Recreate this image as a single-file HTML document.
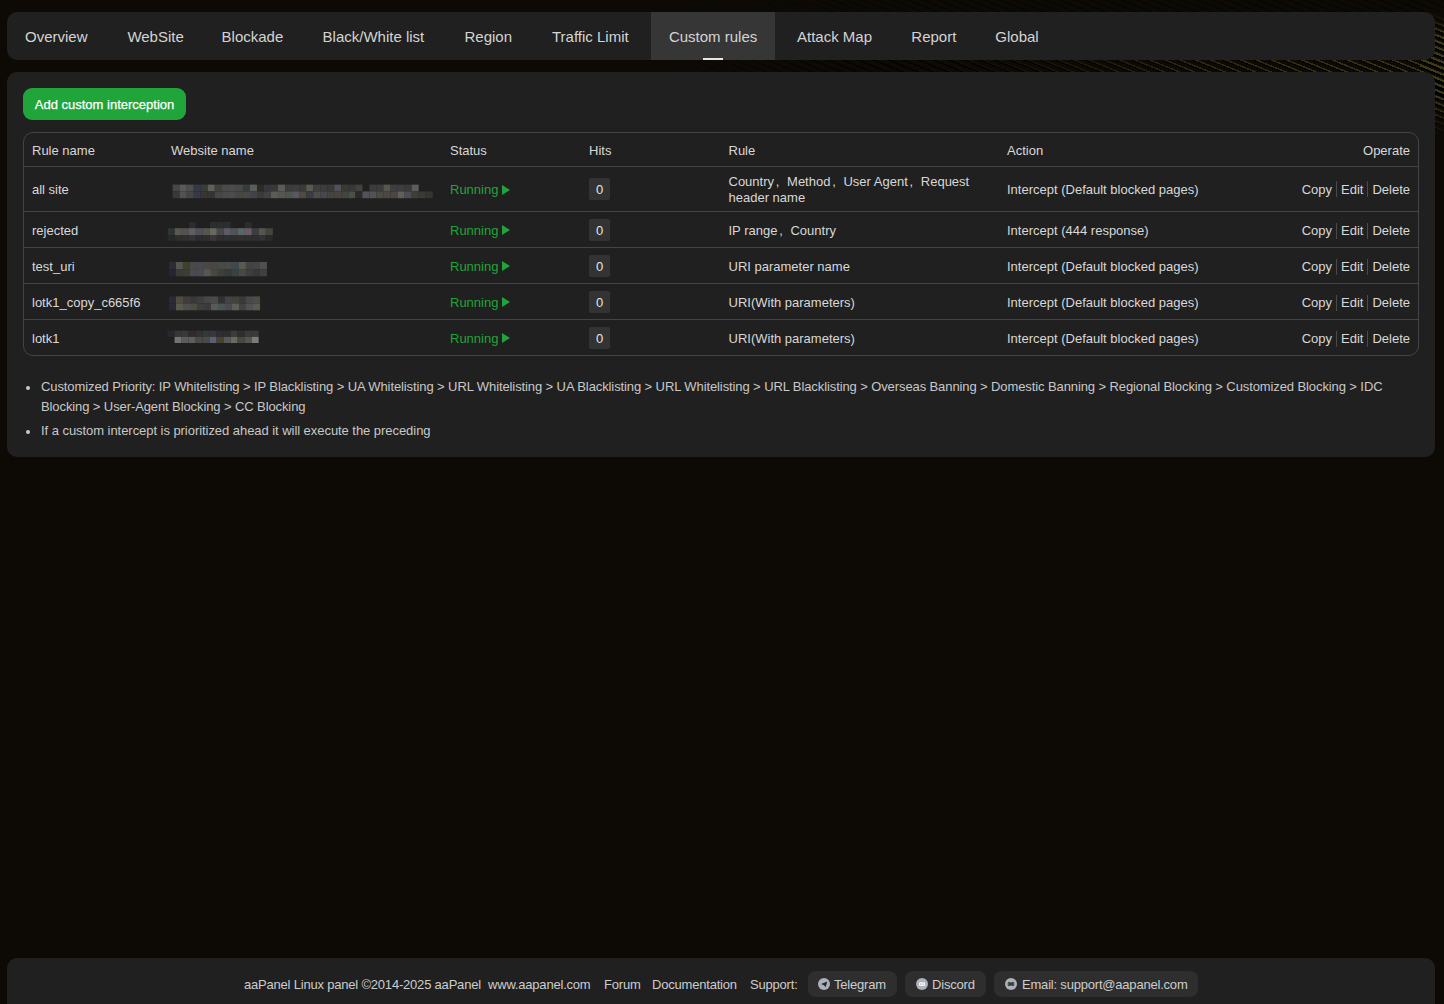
<!DOCTYPE html>
<html><head><meta charset="utf-8">
<style>
*{box-sizing:border-box;margin:0;padding:0}
html,body{width:1444px;height:1004px;overflow:hidden}
body{background:#0d0a06;font-family:"Liberation Sans",sans-serif;position:relative}
.stA{position:absolute;left:640px;top:0;width:804px;height:100px;opacity:0.9;
 background:repeating-linear-gradient(22deg, rgba(0,0,0,0) 0px, rgba(0,0,0,0) 2.5px, rgba(0,0,0,0.85) 2.5px, rgba(0,0,0,0.85) 4.2px, rgba(0,0,0,0) 4.2px, rgba(0,0,0,0) 5.7px);
 -webkit-mask-image:linear-gradient(to right, rgba(0,0,0,0) 0px, rgba(0,0,0,1) 300px)}
.stB{position:absolute;left:844px;top:0;width:600px;height:200px;
 background:repeating-linear-gradient(22deg, rgba(0,0,0,0) 0px, rgba(0,0,0,0) 4.2px, rgba(58,54,22,1) 4.2px, rgba(58,54,22,1) 5.7px);
 -webkit-mask-image:radial-gradient(ellipse 560px 56px at 600px 66px, rgba(0,0,0,1) 0%, rgba(0,0,0,0.7) 45%, rgba(0,0,0,0.2) 75%, rgba(0,0,0,0) 100%)}
.stC{position:absolute;left:1420px;top:0;width:24px;height:200px;
 background:repeating-linear-gradient(22deg, rgba(0,0,0,0) 0px, rgba(0,0,0,0) 2.5px, rgba(0,0,0,0.85) 2.5px, rgba(0,0,0,0.85) 4.2px, rgba(64,60,24,1) 4.2px, rgba(64,60,24,1) 5.7px);
 -webkit-mask-image:linear-gradient(to bottom, rgba(0,0,0,0) 15px, rgba(0,0,0,1) 35px, rgba(0,0,0,1) 95px, rgba(0,0,0,0) 135px)}
.panel{position:absolute;left:7px;width:1428px;background:#202020;border-radius:10px}
.nav{top:12px;height:48px}
.tab{position:absolute;top:13px;height:48px;line-height:48px;font-size:15px;color:#d4d4d4;white-space:nowrap}
.tab-active{position:absolute;left:651px;top:12px;width:124px;height:48px;background:#363636}
.tab-ul{position:absolute;left:703px;top:58px;width:20px;height:2px;background:#e6e6e6}
.content{top:72px;height:385px}
.btn{position:absolute;left:23px;top:88px;width:163px;height:32px;border-radius:9px;background:#20a53a;color:#fff;font-size:13px;line-height:34px;text-align:center;white-space:nowrap;-webkit-text-stroke:0.25px #fff}
.tbl{position:absolute;left:23px;top:132px;width:1396px;height:224px;border:1px solid #444444;border-radius:10px}
.hline{position:absolute;left:24px;width:1394px;height:1px;background:#444444}
.row{position:absolute;left:0;width:1444px}
.c{position:absolute;top:0;height:100%;display:flex;align-items:center;font-size:13px;color:#d8d8d8;white-space:nowrap}
.c.two{line-height:16px;top:1px}
.fw{display:inline-block;width:7.6px}
.fwl{display:inline-block;width:1.8px}
.dn .c{top:1px}
.dn .tri{top:-1px}
.hdr .c{color:#d8d8d8}
.run{color:#20a53a}
.tri{display:inline-block;width:0;height:0;border-left:8.5px solid #20a53a;border-top:5.5px solid transparent;border-bottom:5.5px solid transparent;margin-left:3.8px;position:relative;top:1px}
.hits{position:absolute;width:21px;height:22px;background:#333333;border-radius:2px;color:#e6e6e6;font-size:13px;line-height:24px;text-align:center}
.ops{right:34px}
.ops a{color:#d8d8d8}
.sep{display:inline-block;width:1px;height:16px;background:#4a4a4a;margin:0 4px}
.notes{position:absolute;left:41px;top:377px;width:1378px;font-size:13px;color:#c8c8c8;line-height:20px;letter-spacing:-0.1px}
.notes li{list-style:none;position:relative;margin-bottom:4px}
.notes li:before{content:"";position:absolute;left:-15px;top:9px;width:4px;height:4px;border-radius:50%;background:#c8c8c8}
.footer{top:958px;height:70px}
.ft{position:absolute;top:972px;height:25px;line-height:25px;font-size:13px;color:#cdcdcd;white-space:nowrap;letter-spacing:-0.2px}
.pill{position:absolute;top:971px;height:26px;border-radius:8px;background:#2e2e2e}
.ico{position:absolute;top:978px;width:12px;height:12px}
</style></head><body>
<div class="stA" style="height:12px;opacity:0.45"></div><div class="stA" style="top:60px;height:40px;background-position:0 -60px"></div><div class="stB"></div><div class="stC"></div>
<div class="panel nav"></div>
<div class="tab-active"></div>
<div class="tab-ul"></div>
<span class="tab" style="left:25.0px">Overview</span><span class="tab" style="left:127.4px">WebSite</span><span class="tab" style="left:221.6px">Blockade</span><span class="tab" style="left:322.6px">Black/White list</span><span class="tab" style="left:464.5px">Region</span><span class="tab" style="left:552.0px">Traffic Limit</span><span class="tab" style="left:668.9px">Custom rules</span><span class="tab" style="left:797.0px">Attack Map</span><span class="tab" style="left:911.3px">Report</span><span class="tab" style="left:995.3px">Global</span>
<div class="panel content"></div>
<div class="btn">Add custom interception</div>
<div class="tbl"></div>
<div class="row hdr" style="top:134px;height:33px">
<span class="c" style="left:32px">Rule name</span>
<span class="c" style="left:171px">Website name</span>
<span class="c" style="left:450px">Status</span>
<span class="c" style="left:589px">Hits</span>
<span class="c" style="left:728.5px">Rule</span>
<span class="c" style="left:1007px">Action</span>
<span class="c" style="right:34px">Operate</span>
</div>
<div class="hline" style="top:166px"></div>
<div class="row" style="top:167px;height:44px">
<span class="c" style="left:32px">all site</span>
<span class="c run" style="left:450px">Running<i class="tri"></i></span>
<span class="hits" style="left:589px;top:11px">0</span>
<span class="c two" style="left:728.5px"><span>Country<i class=fwl></i>,<i class=fw></i>Method<i class=fwl></i>,<i class=fw></i>User Agent<i class=fwl></i>,<i class=fw></i>Request<br>header name</span></span>
<span class="c" style="left:1007px">Intercept (Default blocked pages)</span>
<span class="c ops"><a>Copy</a><b class="sep"></b><a>Edit</a><b class="sep"></b><a>Delete</a></span>
</div><div class="hline" style="top:211px"></div><div class="row dn" style="top:212px;height:35px">
<span class="c" style="left:32px">rejected</span>
<span class="c run" style="left:450px">Running<i class="tri"></i></span>
<span class="hits" style="left:589px;top:7px">0</span>
<span class="c" style="left:728.5px"><span>IP range<i class=fwl></i>,<i class=fw></i>Country</span></span>
<span class="c" style="left:1007px">Intercept (444 response)</span>
<span class="c ops"><a>Copy</a><b class="sep"></b><a>Edit</a><b class="sep"></b><a>Delete</a></span>
</div><div class="hline" style="top:247px"></div><div class="row dn" style="top:248px;height:35px">
<span class="c" style="left:32px">test_uri</span>
<span class="c run" style="left:450px">Running<i class="tri"></i></span>
<span class="hits" style="left:589px;top:7px">0</span>
<span class="c" style="left:728.5px"><span>URI parameter name</span></span>
<span class="c" style="left:1007px">Intercept (Default blocked pages)</span>
<span class="c ops"><a>Copy</a><b class="sep"></b><a>Edit</a><b class="sep"></b><a>Delete</a></span>
</div><div class="hline" style="top:283px"></div><div class="row dn" style="top:284px;height:35px">
<span class="c" style="left:32px">lotk1_copy_c665f6</span>
<span class="c run" style="left:450px">Running<i class="tri"></i></span>
<span class="hits" style="left:589px;top:7px">0</span>
<span class="c" style="left:728.5px"><span>URI(With parameters)</span></span>
<span class="c" style="left:1007px">Intercept (Default blocked pages)</span>
<span class="c ops"><a>Copy</a><b class="sep"></b><a>Edit</a><b class="sep"></b><a>Delete</a></span>
</div><div class="hline" style="top:319px"></div><div class="row dn" style="top:320px;height:35px">
<span class="c" style="left:32px">lotk1</span>
<span class="c run" style="left:450px">Running<i class="tri"></i></span>
<span class="hits" style="left:589px;top:7px">0</span>
<span class="c" style="left:728.5px"><span>URI(With parameters)</span></span>
<span class="c" style="left:1007px">Intercept (Default blocked pages)</span>
<span class="c ops"><a>Copy</a><b class="sep"></b><a>Edit</a><b class="sep"></b><a>Delete</a></span>
</div>
<svg style="position:absolute;left:0;top:0;filter:blur(0.45px)" width="1444" height="400"><rect x="172.60" y="184.60" width="7.08" height="6.80" fill="#464644"/><rect x="179.63" y="184.60" width="7.08" height="6.80" fill="#5a5a58"/><rect x="186.66" y="184.60" width="7.08" height="6.80" fill="#4e4e4c"/><rect x="193.69" y="184.60" width="7.08" height="6.80" fill="#34384a"/><rect x="200.72" y="184.60" width="7.08" height="6.80" fill="#3c3c36"/><rect x="207.75" y="184.60" width="7.08" height="6.80" fill="#5e605a"/><rect x="214.78" y="184.60" width="7.08" height="6.80" fill="#404040"/><rect x="221.81" y="184.60" width="7.08" height="6.80" fill="#4a4a4a"/><rect x="228.84" y="184.60" width="7.08" height="6.80" fill="#4c4c4a"/><rect x="235.87" y="184.60" width="7.08" height="6.80" fill="#484846"/><rect x="242.90" y="184.60" width="7.08" height="6.80" fill="#343c40"/><rect x="249.93" y="184.60" width="7.08" height="6.80" fill="#5c5c5c"/><rect x="256.96" y="184.60" width="7.08" height="6.80" fill="#2e2a24"/><rect x="263.99" y="184.60" width="7.08" height="6.80" fill="#36363c"/><rect x="271.02" y="184.60" width="7.08" height="6.80" fill="#383838"/><rect x="278.05" y="184.60" width="7.08" height="6.80" fill="#5a5c58"/><rect x="285.08" y="184.60" width="7.08" height="6.80" fill="#3c3c3a"/><rect x="292.11" y="184.60" width="7.08" height="6.80" fill="#403c3e"/><rect x="299.14" y="184.60" width="7.08" height="6.80" fill="#3a3a3a"/><rect x="306.17" y="184.60" width="7.08" height="6.80" fill="#5a5850"/><rect x="313.20" y="184.60" width="7.08" height="6.80" fill="#3c4040"/><rect x="320.23" y="184.60" width="7.08" height="6.80" fill="#3c3c3a"/><rect x="327.26" y="184.60" width="7.08" height="6.80" fill="#383a38"/><rect x="334.29" y="184.60" width="7.08" height="6.80" fill="#50525a"/><rect x="341.32" y="184.60" width="7.08" height="6.80" fill="#3c3a30"/><rect x="348.35" y="184.60" width="7.08" height="6.80" fill="#383836"/><rect x="355.38" y="184.60" width="7.08" height="6.80" fill="#44423e"/><rect x="369.44" y="184.60" width="7.08" height="6.80" fill="#3a3c3c"/><rect x="376.47" y="184.60" width="7.08" height="6.80" fill="#3a3c3e"/><rect x="383.50" y="184.60" width="7.08" height="6.80" fill="#565850"/><rect x="390.53" y="184.60" width="7.08" height="6.80" fill="#3e3e40"/><rect x="397.56" y="184.60" width="7.08" height="6.80" fill="#3e3e3e"/><rect x="404.59" y="184.60" width="7.08" height="6.80" fill="#3a3a3a"/><rect x="411.62" y="184.60" width="7.08" height="6.80" fill="#5e5a5e"/><rect x="172.60" y="191.40" width="7.08" height="6.80" fill="#383834"/><rect x="179.63" y="191.40" width="7.08" height="6.80" fill="#525252"/><rect x="186.66" y="191.40" width="7.08" height="6.80" fill="#464644"/><rect x="193.69" y="191.40" width="7.08" height="6.80" fill="#363848"/><rect x="200.72" y="191.40" width="7.08" height="6.80" fill="#38362e"/><rect x="207.75" y="191.40" width="7.08" height="6.80" fill="#323436"/><rect x="214.78" y="191.40" width="7.08" height="6.80" fill="#464846"/><rect x="221.81" y="191.40" width="7.08" height="6.80" fill="#4a4a48"/><rect x="228.84" y="191.40" width="7.08" height="6.80" fill="#4c4c4a"/><rect x="235.87" y="191.40" width="7.08" height="6.80" fill="#464644"/><rect x="242.90" y="191.40" width="7.08" height="6.80" fill="#4a4844"/><rect x="249.93" y="191.40" width="7.08" height="6.80" fill="#40444a"/><rect x="256.96" y="191.40" width="7.08" height="6.80" fill="#3c3a34"/><rect x="263.99" y="191.40" width="7.08" height="6.80" fill="#3e4244"/><rect x="271.02" y="191.40" width="7.08" height="6.80" fill="#5a5c5a"/><rect x="278.05" y="191.40" width="7.08" height="6.80" fill="#565652"/><rect x="285.08" y="191.40" width="7.08" height="6.80" fill="#525450"/><rect x="292.11" y="191.40" width="7.08" height="6.80" fill="#565a5c"/><rect x="299.14" y="191.40" width="7.08" height="6.80" fill="#504a40"/><rect x="306.17" y="191.40" width="7.08" height="6.80" fill="#383e40"/><rect x="313.20" y="191.40" width="7.08" height="6.80" fill="#4c4e46"/><rect x="320.23" y="191.40" width="7.08" height="6.80" fill="#48484c"/><rect x="327.26" y="191.40" width="7.08" height="6.80" fill="#46443e"/><rect x="334.29" y="191.40" width="7.08" height="6.80" fill="#48443e"/><rect x="341.32" y="191.40" width="7.08" height="6.80" fill="#46443e"/><rect x="348.35" y="191.40" width="7.08" height="6.80" fill="#485048"/><rect x="355.38" y="191.40" width="7.08" height="6.80" fill="#2e2a28"/><rect x="362.41" y="191.40" width="7.08" height="6.80" fill="#52525a"/><rect x="369.44" y="191.40" width="7.08" height="6.80" fill="#545250"/><rect x="376.47" y="191.40" width="7.08" height="6.80" fill="#4c4a44"/><rect x="383.50" y="191.40" width="7.08" height="6.80" fill="#4c4644"/><rect x="390.53" y="191.40" width="7.08" height="6.80" fill="#4a4844"/><rect x="397.56" y="191.40" width="7.08" height="6.80" fill="#5e605c"/><rect x="404.59" y="191.40" width="7.08" height="6.80" fill="#504c54"/><rect x="411.62" y="191.40" width="7.08" height="6.80" fill="#3c403c"/><rect x="418.65" y="191.40" width="7.08" height="6.80" fill="#3a3a36"/><rect x="425.68" y="191.40" width="7.08" height="6.80" fill="#343432"/><rect x="188.80" y="222.00" width="7.05" height="6.00" fill="#2c2c2c"/><rect x="209.80" y="222.00" width="7.05" height="6.00" fill="#2a2e2c"/><rect x="216.80" y="222.00" width="7.05" height="6.00" fill="#2a2e2c"/><rect x="223.80" y="222.00" width="7.05" height="6.00" fill="#2a2e2c"/><rect x="244.80" y="222.00" width="7.05" height="6.00" fill="#2c2c2c"/><rect x="167.80" y="228.20" width="7.05" height="7.20" fill="#2e3434"/><rect x="174.80" y="228.20" width="7.05" height="7.20" fill="#5a5652"/><rect x="181.80" y="228.20" width="7.05" height="7.20" fill="#525250"/><rect x="188.80" y="228.20" width="7.05" height="7.20" fill="#5e5e64"/><rect x="195.80" y="228.20" width="7.05" height="7.20" fill="#505058"/><rect x="202.80" y="228.20" width="7.05" height="7.20" fill="#555552"/><rect x="209.80" y="228.20" width="7.05" height="7.20" fill="#686860"/><rect x="216.80" y="228.20" width="7.05" height="7.20" fill="#48484a"/><rect x="223.80" y="228.20" width="7.05" height="7.20" fill="#5c5a64"/><rect x="230.80" y="228.20" width="7.05" height="7.20" fill="#505452"/><rect x="237.80" y="228.20" width="7.05" height="7.20" fill="#5a6666"/><rect x="244.80" y="228.20" width="7.05" height="7.20" fill="#6a5c64"/><rect x="251.80" y="228.20" width="7.05" height="7.20" fill="#3a3e42"/><rect x="258.80" y="228.20" width="7.05" height="7.20" fill="#56544e"/><rect x="265.80" y="228.20" width="7.05" height="7.20" fill="#44443e"/><rect x="167.80" y="235.40" width="7.05" height="5.40" fill="#262a2c"/><rect x="174.80" y="235.40" width="7.05" height="5.40" fill="#302e2c"/><rect x="181.80" y="235.40" width="7.05" height="5.40" fill="#302e2e"/><rect x="188.80" y="235.40" width="7.05" height="5.40" fill="#343436"/><rect x="195.80" y="235.40" width="7.05" height="5.40" fill="#2c2c2e"/><rect x="202.80" y="235.40" width="7.05" height="5.40" fill="#2e2e2e"/><rect x="209.80" y="235.40" width="7.05" height="5.40" fill="#38383a"/><rect x="216.80" y="235.40" width="7.05" height="5.40" fill="#2e2e30"/><rect x="223.80" y="235.40" width="7.05" height="5.40" fill="#2c3034"/><rect x="230.80" y="235.40" width="7.05" height="5.40" fill="#2e3030"/><rect x="237.80" y="235.40" width="7.05" height="5.40" fill="#303030"/><rect x="244.80" y="235.40" width="7.05" height="5.40" fill="#303032"/><rect x="251.80" y="235.40" width="7.05" height="5.40" fill="#2e302e"/><rect x="258.80" y="235.40" width="7.05" height="5.40" fill="#343234"/><rect x="265.80" y="235.40" width="7.05" height="5.40" fill="#2a2a28"/><rect x="168.90" y="262.00" width="7.05" height="7.10" fill="#2a2c36"/><rect x="175.90" y="262.00" width="7.05" height="7.10" fill="#545450"/><rect x="182.90" y="262.00" width="7.05" height="7.10" fill="#42402e"/><rect x="189.90" y="262.00" width="7.05" height="7.10" fill="#4a4a4a"/><rect x="196.90" y="262.00" width="7.05" height="7.10" fill="#484a50"/><rect x="203.90" y="262.00" width="7.05" height="7.10" fill="#4c4644"/><rect x="210.90" y="262.00" width="7.05" height="7.10" fill="#484848"/><rect x="217.90" y="262.00" width="7.05" height="7.10" fill="#4a4a46"/><rect x="224.90" y="262.00" width="7.05" height="7.10" fill="#4a4a4a"/><rect x="231.90" y="262.00" width="7.05" height="7.10" fill="#3e4a4c"/><rect x="238.90" y="262.00" width="7.05" height="7.10" fill="#5a5a50"/><rect x="245.90" y="262.00" width="7.05" height="7.10" fill="#404442"/><rect x="252.90" y="262.00" width="7.05" height="7.10" fill="#484446"/><rect x="259.90" y="262.00" width="7.05" height="7.10" fill="#505052"/><rect x="168.90" y="269.10" width="7.05" height="7.20" fill="#262630"/><rect x="175.90" y="269.10" width="7.05" height="7.20" fill="#3a3a38"/><rect x="182.90" y="269.10" width="7.05" height="7.20" fill="#3e3e30"/><rect x="189.90" y="269.10" width="7.05" height="7.20" fill="#4a4a50"/><rect x="196.90" y="269.10" width="7.05" height="7.20" fill="#4a4c54"/><rect x="203.90" y="269.10" width="7.05" height="7.20" fill="#585650"/><rect x="210.90" y="269.10" width="7.05" height="7.20" fill="#48483e"/><rect x="217.90" y="269.10" width="7.05" height="7.20" fill="#3e403e"/><rect x="224.90" y="269.10" width="7.05" height="7.20" fill="#3a3a36"/><rect x="231.90" y="269.10" width="7.05" height="7.20" fill="#3a4244"/><rect x="238.90" y="269.10" width="7.05" height="7.20" fill="#4a4a44"/><rect x="245.90" y="269.10" width="7.05" height="7.20" fill="#3e3e3e"/><rect x="252.90" y="269.10" width="7.05" height="7.20" fill="#3c3636"/><rect x="259.90" y="269.10" width="7.05" height="7.20" fill="#40403c"/><rect x="169.00" y="296.40" width="7.05" height="7.00" fill="#2a2c34"/><rect x="176.00" y="296.40" width="7.05" height="7.00" fill="#4e4e40"/><rect x="183.00" y="296.40" width="7.05" height="7.00" fill="#403c3e"/><rect x="190.00" y="296.40" width="7.05" height="7.00" fill="#3a3836"/><rect x="197.00" y="296.40" width="7.05" height="7.00" fill="#3e3e3c"/><rect x="204.00" y="296.40" width="7.05" height="7.00" fill="#464846"/><rect x="211.00" y="296.40" width="7.05" height="7.00" fill="#4a4a4a"/><rect x="218.00" y="296.40" width="7.05" height="7.00" fill="#2e3234"/><rect x="225.00" y="296.40" width="7.05" height="7.00" fill="#46424a"/><rect x="232.00" y="296.40" width="7.05" height="7.00" fill="#424238"/><rect x="239.00" y="296.40" width="7.05" height="7.00" fill="#3a3a3a"/><rect x="246.00" y="296.40" width="7.05" height="7.00" fill="#46484a"/><rect x="253.00" y="296.40" width="7.05" height="7.00" fill="#4e4c44"/><rect x="169.00" y="303.40" width="7.05" height="6.90" fill="#2a2a34"/><rect x="176.00" y="303.40" width="7.05" height="6.90" fill="#585a4c"/><rect x="183.00" y="303.40" width="7.05" height="6.90" fill="#4c4e50"/><rect x="190.00" y="303.40" width="7.05" height="6.90" fill="#4e4a44"/><rect x="197.00" y="303.40" width="7.05" height="6.90" fill="#3e3e3c"/><rect x="204.00" y="303.40" width="7.05" height="6.90" fill="#3a3a3a"/><rect x="211.00" y="303.40" width="7.05" height="6.90" fill="#585a56"/><rect x="218.00" y="303.40" width="7.05" height="6.90" fill="#4a5454"/><rect x="225.00" y="303.40" width="7.05" height="6.90" fill="#4c484c"/><rect x="232.00" y="303.40" width="7.05" height="6.90" fill="#5c5e5a"/><rect x="239.00" y="303.40" width="7.05" height="6.90" fill="#424240"/><rect x="246.00" y="303.40" width="7.05" height="6.90" fill="#4e5250"/><rect x="253.00" y="303.40" width="7.05" height="6.90" fill="#5c5a50"/><rect x="167.60" y="330.70" width="7.05" height="6.20" fill="#262830"/><rect x="174.60" y="330.70" width="7.05" height="6.20" fill="#343638"/><rect x="181.60" y="330.70" width="7.05" height="6.20" fill="#3a3838"/><rect x="188.60" y="330.70" width="7.05" height="6.20" fill="#302c2a"/><rect x="195.60" y="330.70" width="7.05" height="6.20" fill="#343230"/><rect x="202.60" y="330.70" width="7.05" height="6.20" fill="#343a3c"/><rect x="209.60" y="330.70" width="7.05" height="6.20" fill="#38383a"/><rect x="216.60" y="330.70" width="7.05" height="6.20" fill="#2c3034"/><rect x="223.60" y="330.70" width="7.05" height="6.20" fill="#302c2c"/><rect x="230.60" y="330.70" width="7.05" height="6.20" fill="#383c3a"/><rect x="237.60" y="330.70" width="7.05" height="6.20" fill="#302e2a"/><rect x="244.60" y="330.70" width="7.05" height="6.20" fill="#3a3a3a"/><rect x="251.60" y="330.70" width="7.05" height="6.20" fill="#3a3a3a"/><rect x="174.60" y="336.90" width="7.05" height="6.10" fill="#707472"/><rect x="181.60" y="336.90" width="7.05" height="6.10" fill="#5c5c5c"/><rect x="188.60" y="336.90" width="7.05" height="6.10" fill="#5e5e5e"/><rect x="195.60" y="336.90" width="7.05" height="6.10" fill="#4c4a44"/><rect x="202.60" y="336.90" width="7.05" height="6.10" fill="#4a4a4a"/><rect x="209.60" y="336.90" width="7.05" height="6.10" fill="#5a6070"/><rect x="216.60" y="336.90" width="7.05" height="6.10" fill="#4a4030"/><rect x="223.60" y="336.90" width="7.05" height="6.10" fill="#56585c"/><rect x="230.60" y="336.90" width="7.05" height="6.10" fill="#6a6a60"/><rect x="237.60" y="336.90" width="7.05" height="6.10" fill="#48483e"/><rect x="244.60" y="336.90" width="7.05" height="6.10" fill="#545454"/><rect x="251.60" y="336.90" width="7.05" height="6.10" fill="#7a7c78"/></svg>
<ul class="notes">
<li>Customized Priority: IP Whitelisting &gt; IP Blacklisting &gt; UA Whitelisting &gt; URL Whitelisting &gt; UA Blacklisting &gt; URL Whitelisting &gt; URL Blacklisting &gt; Overseas Banning &gt; Domestic Banning &gt; Regional Blocking &gt; Customized Blocking &gt; IDC Blocking &gt; User-Agent Blocking &gt; CC Blocking</li>
<li style="letter-spacing:-0.05px">If a custom intercept is prioritized ahead it will execute the preceding</li>
</ul>
<div class="panel footer"></div>
<span class="ft" style="left:244px">aaPanel Linux panel ©2014-2025 aaPanel</span>
<span class="ft" style="left:488px">www.aapanel.com</span>
<span class="ft" style="left:604px">Forum</span>
<span class="ft" style="left:652px">Documentation</span>
<span class="ft" style="left:750px">Support:</span>
<div class="pill" style="left:808px;width:89px"></div>
<svg class="ico" style="left:818px" viewBox="0 0 12 12"><circle cx="6" cy="6" r="6" fill="#acb2ba"/><path d="M3 6.1 L9.3 3.6 L7.6 9.3 L6.1 7.3 Z" fill="#262626"/></svg>
<span class="ft" style="left:834px">Telegram</span>
<div class="pill" style="left:905px;width:81px"></div>
<svg class="ico" style="left:916px" viewBox="0 0 12 12"><circle cx="6" cy="6" r="6" fill="#acb2ba"/><path d="M3.1 4.2 H8.9 L9.2 7.6 Q6 8.6 2.8 7.6 Z" fill="#f4f4f4"/><circle cx="4.9" cy="6.1" r="0.6" fill="#9aa0a8"/><circle cx="7.1" cy="6.1" r="0.6" fill="#9aa0a8"/></svg>
<span class="ft" style="left:932px">Discord</span>
<div class="pill" style="left:994px;width:204px"></div>
<svg class="ico" style="left:1005px" viewBox="0 0 12 12"><circle cx="6" cy="6" r="6" fill="#acb2ba"/><rect x="2.6" y="4" width="6.8" height="4" rx="1.6" fill="#555a60"/><path d="M3.4 4.3 L6 6.4 L8.6 4.3" stroke="#222" stroke-width="0.9" fill="none"/><path d="M3.4 7.7 L5 6.4 M8.6 7.7 L7 6.4" stroke="#222" stroke-width="0.8"/></svg>
<span class="ft" style="left:1022px">Email: support@aapanel.com</span>
</body></html>
